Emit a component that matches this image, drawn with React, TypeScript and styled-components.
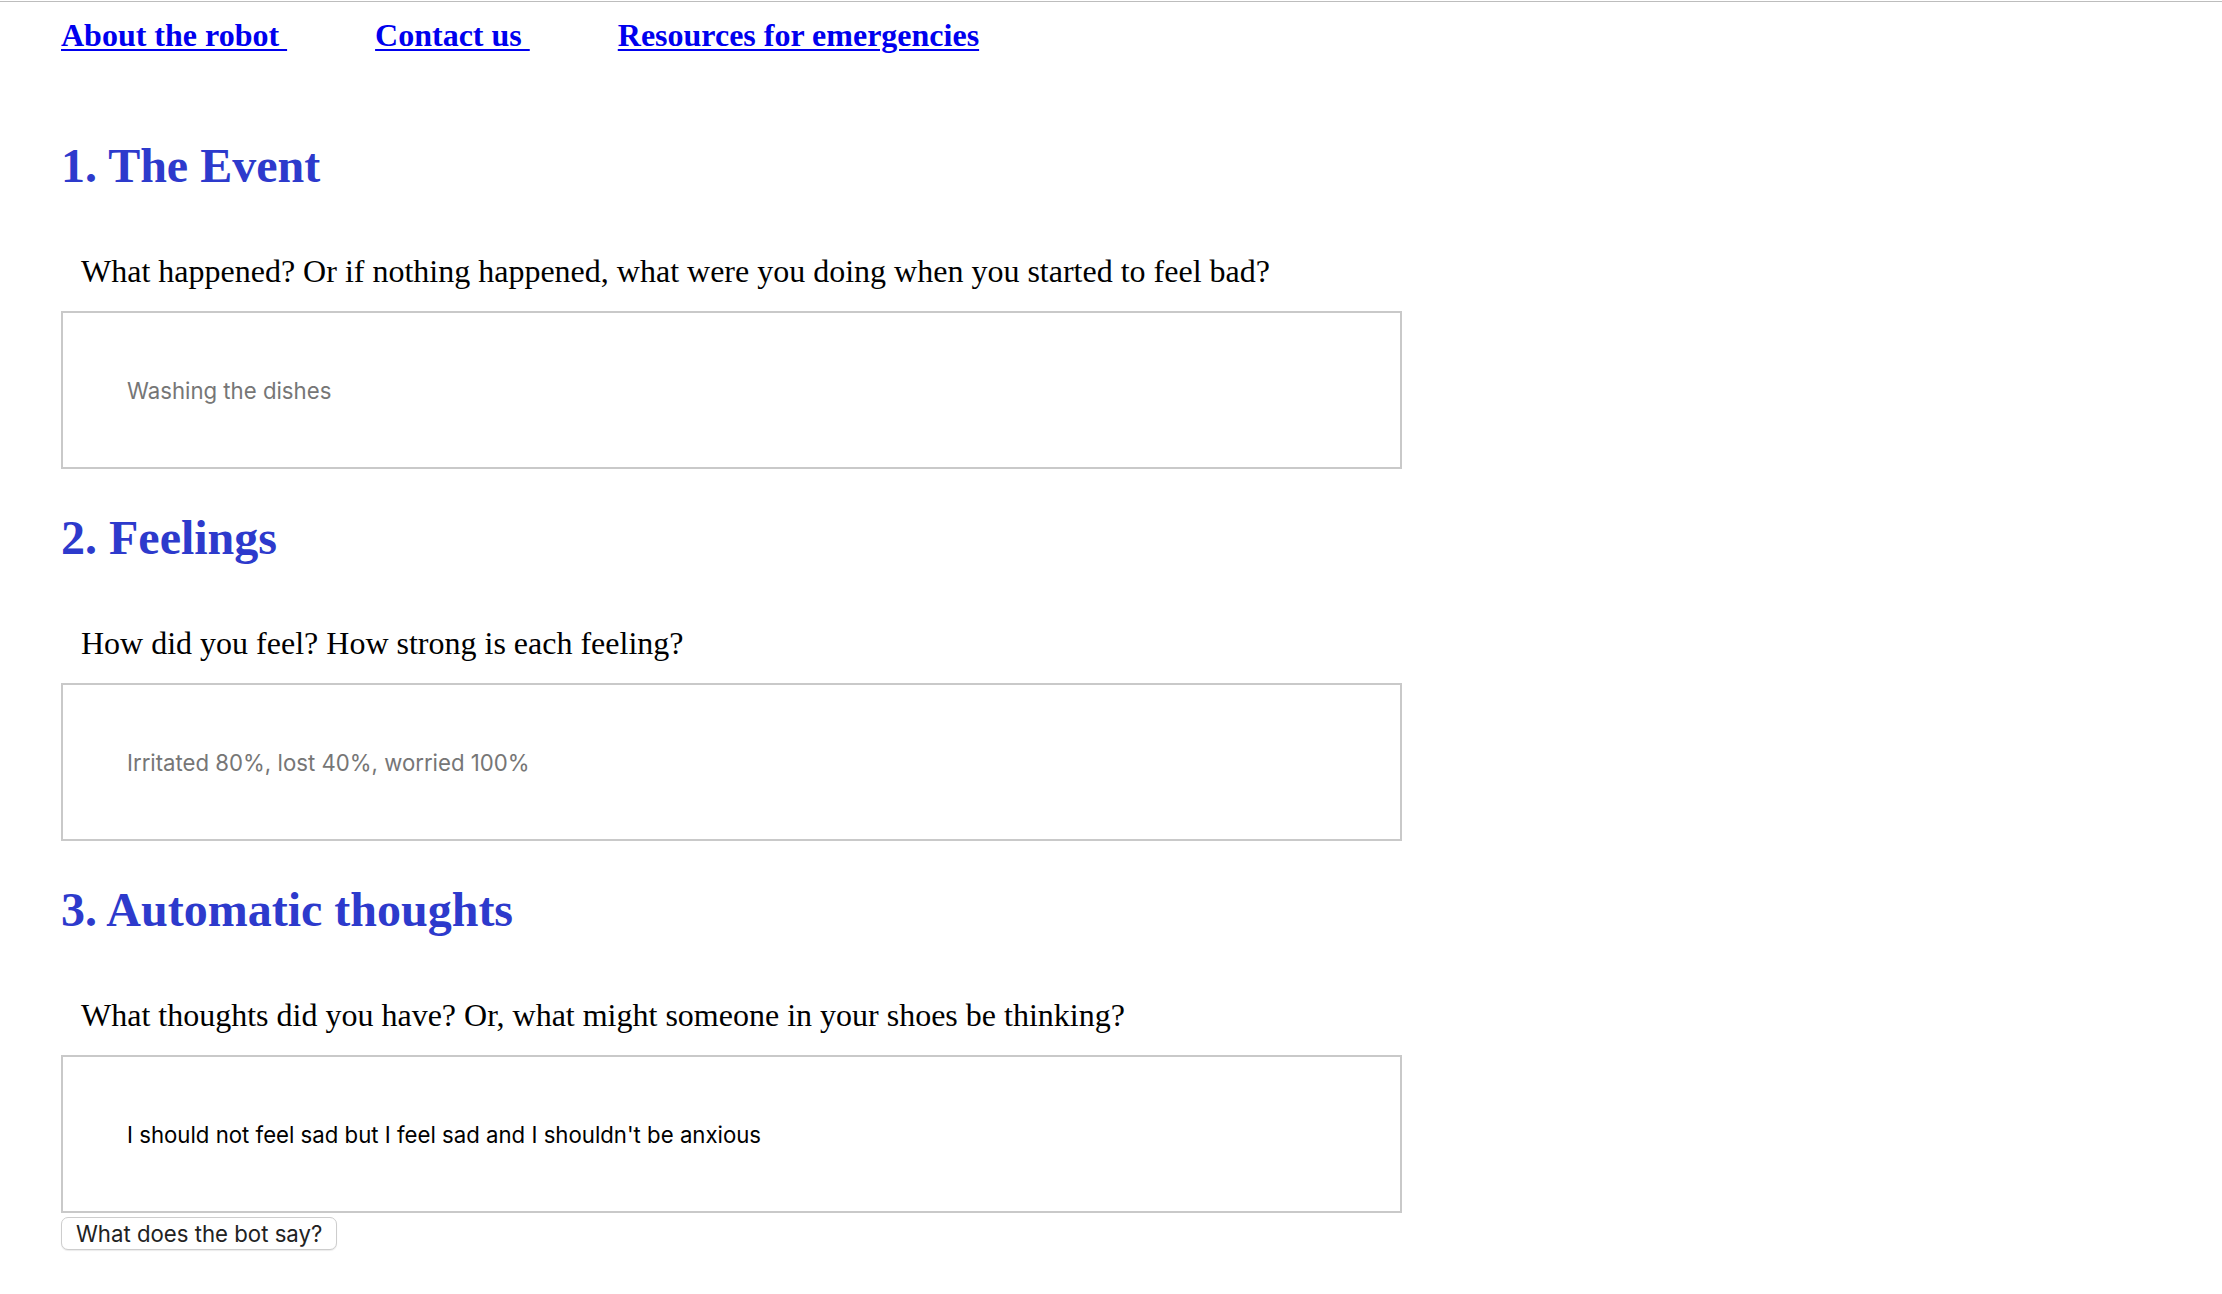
import React from "react";
import styled, { createGlobalStyle } from "styled-components";

const GlobalStyle = createGlobalStyle`
  html, body {
    margin: 0;
    padding: 0;
    background: #ffffff;
  }
  body {
    font-family: "Liberation Serif", "Times New Roman", serif;
    color: #000000;
  }
`;

const Page = styled.div`
  display: flex;
  flex-direction: column;
  min-height: 1294px;
`;

const TopRule = styled.div`
  height: 1px;
  margin-top: 1px;
  background: #bdbdbd;
`;

const Content = styled.main`
  display: flex;
  flex-direction: column;
  padding: 0 0 0 61px;
  width: 1341px;
`;

const Nav = styled.nav`
  display: flex;
  gap: 88px;
  margin-top: 15px;
  line-height: 36px;
`;

const NavLink = styled.a`
  font-family: "Liberation Serif", "Times New Roman", serif;
  font-size: 32px;
  font-weight: 700;
  color: #0000ee;
  text-decoration: underline;
  text-underline-offset: 3px;
  text-decoration-thickness: 2px;
  white-space: pre;
`;

const Section = styled.section<{ $first?: boolean }>`
  display: flex;
  flex-direction: column;
  margin-top: ${(p) => (p.$first ? "85px" : "41px")};
`;

const Heading = styled.h2`
  margin: 0;
  font-family: "Liberation Serif", "Times New Roman", serif;
  font-size: 48px;
  font-weight: 700;
  line-height: 56px;
  color: #2d3acc;
`;

const Question = styled.label`
  display: block;
  margin: 59px 0 0 20px;
  font-family: "Liberation Serif", "Times New Roman", serif;
  font-size: 32px;
  line-height: 36px;
  color: #000000;
`;

const Answer = styled.input`
  box-sizing: border-box;
  margin: 22px 0 0 0;
  width: 1341px;
  height: 158px;
  padding: 0 64px;
  border: 2px solid #c9c9c9;
  border-radius: 0;
  background: #ffffff;
  font-family: Inter, "Liberation Sans", sans-serif;
  font-size: 22.2px;
  color: #000000;
  outline: none;

  &::placeholder {
    color: #767676;
    opacity: 1;
  }
`;

const AskButton = styled.button`
  align-self: flex-start;
  box-sizing: border-box;
  margin-top: 4px;
  height: 33px;
  padding: 0 14px;
  border: 1.5px solid #cdcdcd;
  border-radius: 7px;
  background: #ffffff;
  box-shadow: 0 1px 1px rgba(0, 0, 0, 0.08);
  font-family: Inter, "Liberation Sans", sans-serif;
  font-size: 22.2px;
  line-height: 30px;
  color: #222222;
  cursor: pointer;
`;

type Step = {
  title: string;
  question: string;
  placeholder?: string;
  value?: string;
};

const steps: Step[] = [
  {
    title: "1. The Event",
    question:
      "What happened? Or if nothing happened, what were you doing when you started to feel bad?",
    placeholder: "Washing the dishes",
  },
  {
    title: "2. Feelings",
    question: "How did you feel? How strong is each feeling?",
    placeholder: "Irritated 80%, lost 40%, worried 100%",
  },
  {
    title: "3. Automatic thoughts",
    question:
      "What thoughts did you have? Or, what might someone in your shoes be thinking?",
    value: "I should not feel sad but I feel sad and I shouldn't be anxious",
  },
];

export default function App() {
  return (
    <Page>
      <GlobalStyle />
      <TopRule />
      <Content>
        <Nav>
          <NavLink href="#">{"About the robot "}</NavLink>
          <NavLink href="#">{"Contact us "}</NavLink>
          <NavLink href="#">{"Resources for emergencies"}</NavLink>
        </Nav>
        {steps.map((s, i) => (
          <Section key={s.title} $first={i === 0}>
            <Heading>{s.title}</Heading>
            <Question htmlFor={`step-${i}`}>{s.question}</Question>
            <Answer
              id={`step-${i}`}
              type="text"
              placeholder={s.placeholder}
              defaultValue={s.value}
            />
          </Section>
        ))}
        <AskButton type="button">What does the bot say?</AskButton>
      </Content>
    </Page>
  );
}
